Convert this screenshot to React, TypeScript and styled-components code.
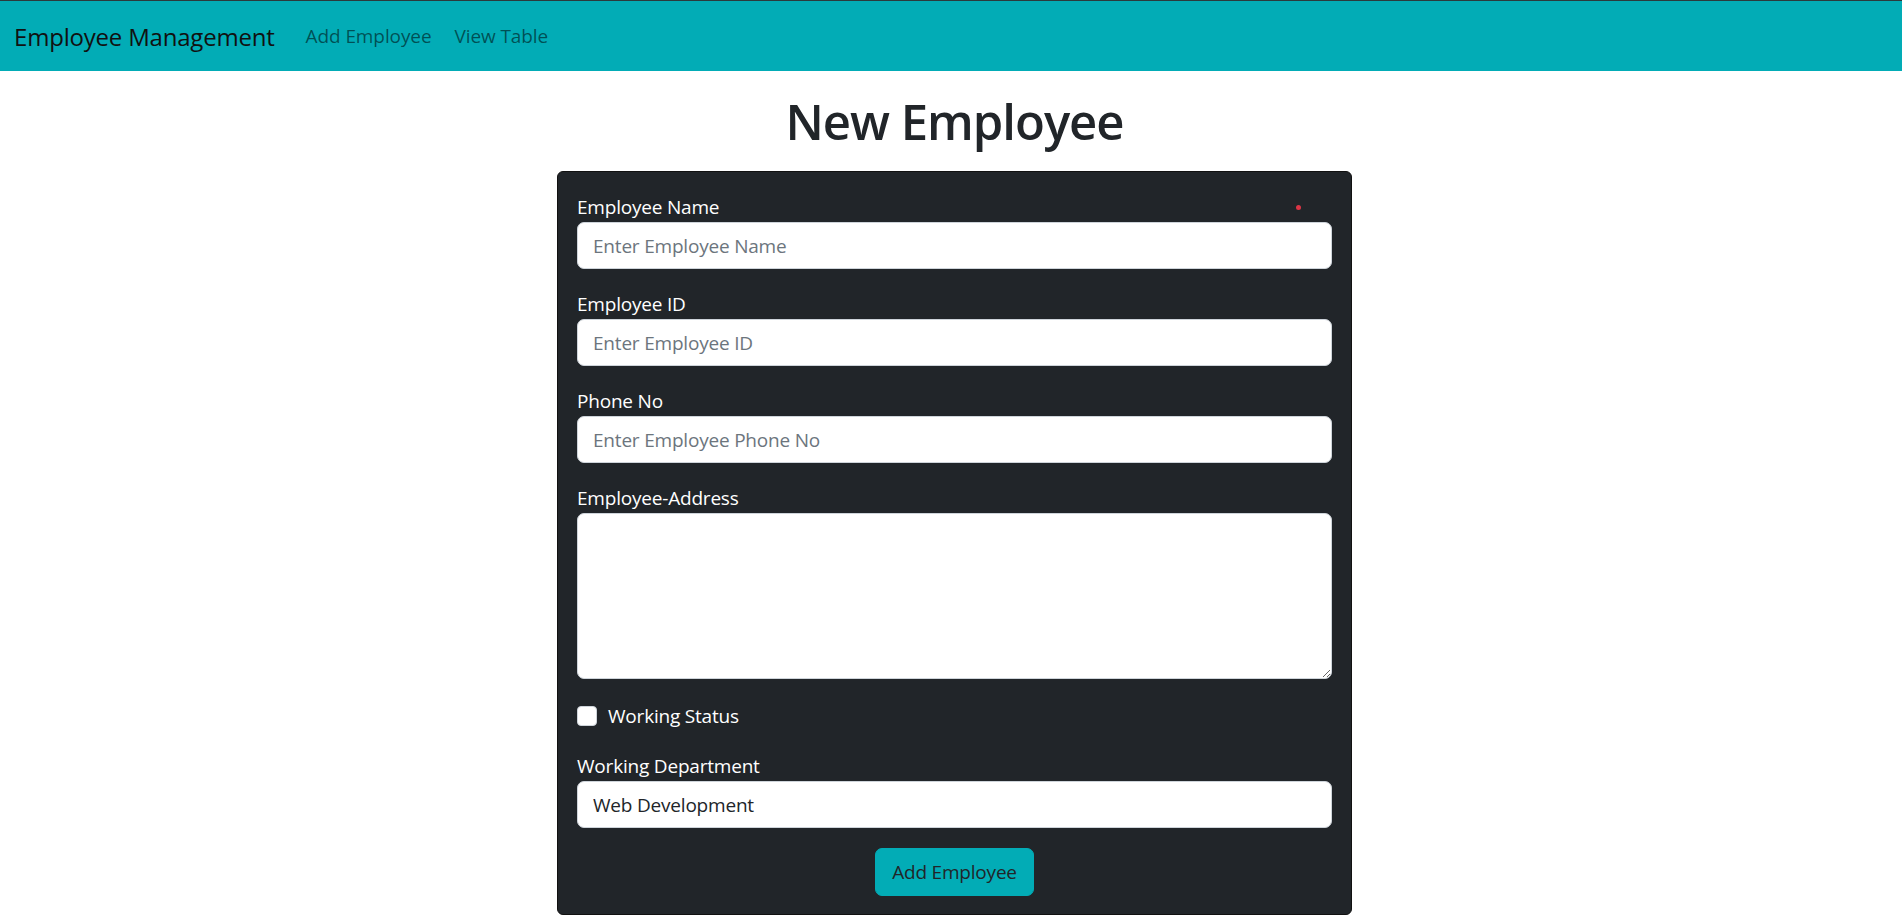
import React from 'react';
import styled, { createGlobalStyle } from 'styled-components';

const GlobalStyle = createGlobalStyle`
  * { box-sizing: border-box; }
  body {
    margin: 0;
    background: #ffffff;
    font-family: "Open Sans", "Noto Sans", "Liberation Sans", sans-serif;
    color: #212529;
  }
`;

const Page = styled.div`
  min-height: 922px;
  border-top: 1px solid #2b3a3c;
`;

const Navbar = styled.nav`
  height: 70px;
  background: #02acb6;
  display: flex;
  align-items: center;
  padding: 0 14px;
`;

const Brand = styled.a`
  font-size: 24px;
  color: #111;
  margin-right: 31px;
  text-decoration: none;
  letter-spacing: -0.2px;
`;

const NavLink = styled.a`
  font-size: 19px;
  color: rgba(0, 0, 0, 0.55);
  margin-right: 23px;
  text-decoration: none;
  letter-spacing: -0.1px;
`;

const Main = styled.main`
  padding-left: 7px;
`;

const Title = styled.h1`
  margin: 0;
  padding-top: 21px;
  height: 100px;
  text-align: center;
  font-size: 49px;
  font-weight: 600;
  line-height: 1.2;
  letter-spacing: -1px;
  color: #212529;
`;

const Card = styled.form`
  width: 795px;
  margin: 0 auto;
  background: #212529;
  border: 1px solid #111;
  border-radius: 6px;
  padding: 20px 19px 18px;
  display: flex;
  flex-direction: column;
`;

const Field = styled.div`
  display: flex;
  flex-direction: column;
  margin-bottom: 20px;
`;

const LabelRow = styled.div`
  display: flex;
  justify-content: space-between;
  align-items: center;
`;

const Label = styled.label`
  color: #ffffff;
  font-size: 19px;
  line-height: 30px;
  letter-spacing: -0.2px;
`;

const RequiredDot = styled.span`
  width: 5px;
  height: 5px;
  border-radius: 50%;
  background: #dc3545;
  margin-right: 31px;
`;

const Input = styled.input`
  height: 47px;
  width: 100%;
  border: 1px solid #ced4da;
  border-radius: 7px;
  padding: 0 15px;
  font-family: inherit;
  font-size: 19px;
  color: #212529;
  background: #fff;
  outline: none;

  &::placeholder {
    color: #6c757d;
    letter-spacing: -0.2px;
  }
`;

const TextArea = styled.textarea`
  height: 166px;
  width: 100%;
  border: 1px solid #ced4da;
  border-radius: 7px;
  padding: 8px 15px;
  font-family: inherit;
  font-size: 19px;
  outline: none;
  resize: vertical;
  display: block;
`;

const CheckRow = styled.div`
  display: flex;
  align-items: center;
  gap: 11px;
  margin-bottom: 20px;
  margin-top: 2px;
  height: 30px;
`;

const CheckBox = styled.input`
  appearance: none;
  width: 20px;
  height: 20px;
  margin: 0;
  background: #fff;
  border: 1px solid #ced4da;
  border-radius: 4px;
`;

const Select = styled.select`
  height: 47px;
  width: 100%;
  border: 1px solid #ced4da;
  border-radius: 7px;
  padding: 0 15px;
  font-family: inherit;
  font-size: 19px;
  color: #212529;
  background: #fff;
  appearance: none;
  outline: none;
  letter-spacing: -0.2px;
`;

const Actions = styled.div`
  display: flex;
  justify-content: center;
`;

const Button = styled.button`
  height: 48px;
  padding: 0 16px;
  background: #02acb6;
  color: #212529;
  border: 1px solid #02acb6;
  border-radius: 7px;
  font-family: inherit;
  font-size: 19px;
  letter-spacing: -0.2px;
  cursor: pointer;
`;

export default function App() {
  return (
    <Page>
      <GlobalStyle />
      <Navbar>
        <Brand href="#">Employee Management</Brand>
        <NavLink href="#">Add Employee</NavLink>
        <NavLink href="#">View Table</NavLink>
      </Navbar>
      <Main>
        <Title>New Employee</Title>
        <Card onSubmit={e => e.preventDefault()}>
          <Field>
            <LabelRow>
              <Label>Employee Name</Label>
              <RequiredDot />
            </LabelRow>
            <Input placeholder="Enter Employee Name" />
          </Field>
          <Field>
            <Label>Employee ID</Label>
            <Input placeholder="Enter Employee ID" />
          </Field>
          <Field>
            <Label>Phone No</Label>
            <Input placeholder="Enter Employee Phone No" />
          </Field>
          <Field>
            <Label>Employee-Address</Label>
            <TextArea />
          </Field>
          <CheckRow>
            <CheckBox type="checkbox" id="status" />
            <Label htmlFor="status">Working Status</Label>
          </CheckRow>
          <Field>
            <Label>Working Department</Label>
            <Select defaultValue="web">
              <option value="web">Web Development</option>
            </Select>
          </Field>
          <Actions>
            <Button type="submit">Add Employee</Button>
          </Actions>
        </Card>
      </Main>
    </Page>
  );
}
